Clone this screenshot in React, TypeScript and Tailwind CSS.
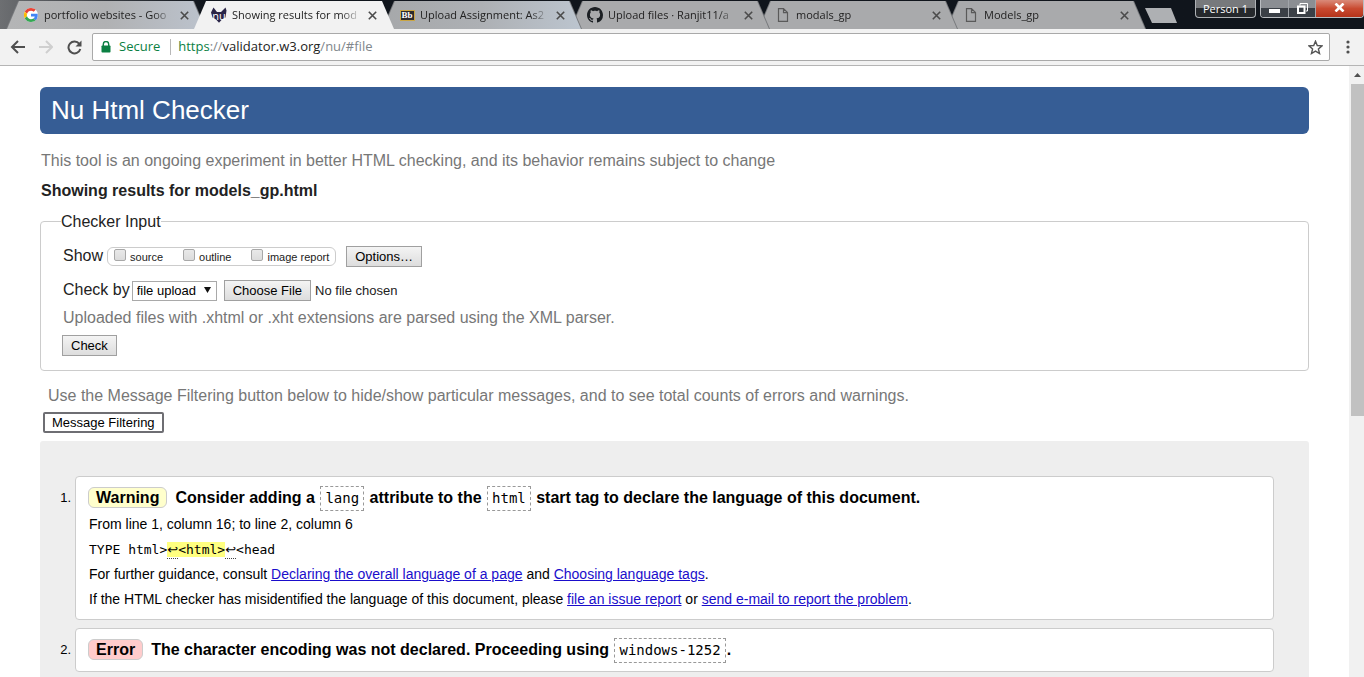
import React from "react";

type Tab = { title: string; icon: React.ReactNode; active?: boolean; fill: string; z: string };

const GoogleIcon = () => (
  <svg width="14" height="14" viewBox="0 0 48 48" aria-hidden="true">
    <circle cx="24" cy="24" r="24" fill="#fff" />
    <path fill="#EA4335" d="M24 9.500c3.500 0 6.700 1.200 9.200 3.600l6.900-6.900C35.900 2.400 30.500 0 24 0 14.600 0 6.500 5.400 2.600 13.200l8 6.200C12.400 13.700 17.700 9.500 24 9.500z" />
    <path fill="#4285F4" d="M47 24.500c0-1.600-.2-3.100-.4-4.500H24v9h12.900c-.6 3-2.300 5.500-4.800 7.200l7.700 6C44.400 38 47 31.800 47 24.500z" />
    <path fill="#FBBC05" d="M10.500 28.600a14.500 14.500 0 0 1 0-9.200l-8-6.200a24 24 0 0 0 0 21.600z" />
    <path fill="#34A853" d="M24 48c6.500 0 11.900-2.100 15.900-5.800l-7.700-6c-2.200 1.500-4.900 2.300-8.200 2.300-6.300 0-11.600-4.200-13.500-9.900l-8 6.200C6.500 42.600 14.600 48 24 48z" />
  </svg>
);

const NuIcon = () => (
  <span className="grid size-4 place-items-center">
    <svg className="col-start-1 row-start-1" width="16" height="16" viewBox="0 0 16 16" aria-hidden="true">
      <path d="M2.500.5l3.500 4.500h4l4.500-4.500 1 3-1 7-3.500 2-3 3.300-3-3.300-3.500-2-1.500-5z" fill="#2a2547" />
    </svg>
    <span className="col-start-1 row-start-1 text-[11px] leading-none text-white">nu</span>
  </span>
);

const BbIcon = () => (
  <span className="flex h-[11px] w-[15px] items-center justify-center border border-[#c9a544] bg-[#2b2b2b] font-['Liberation_Serif',serif] text-[9px] leading-none font-bold text-white">
    Bb
  </span>
);

const GithubIcon = () => (
  <svg width="16" height="16" viewBox="0 0 16 16" fill="#1b1f23" aria-hidden="true">
    <path d="M8 0C3.580 0 0 3.580 0 8c0 3.540 2.290 6.530 5.470 7.590.4.070.55-.17.55-.38 0-.19-.01-.82-.01-1.490-2.010.37-2.530-.49-2.690-.94-.09-.23-.48-.94-.82-1.130-.28-.15-.68-.52-.01-.53.63-.01 1.080.58 1.230.82.72 1.210 1.870.87 2.330.66.07-.52.28-.87.51-1.070-1.780-.2-3.640-.89-3.640-3.950 0-.87.31-1.590.82-2.150-.08-.2-.36-1.020.08-2.120 0 0 .67-.21 2.200.82.64-.18 1.320-.27 2-.27s1.360.09 2 .27c1.530-1.040 2.200-.82 2.200-.82.44 1.100.16 1.920.08 2.120.51.56.82 1.270.82 2.150 0 3.070-1.870 3.750-3.650 3.950.29.25.54.73.54 1.480 0 1.070-.01 1.930-.01 2.200 0 .21.15.46.55.38A8.010 8.010 0 0 0 16 8c0-4.420-3.580-8-8-8z" />
  </svg>
);

const PageIcon = () => (
  <svg width="16" height="16" viewBox="0 0 16 16" fill="none" stroke="#5a5a5a" strokeWidth="1.200" aria-hidden="true">
    <path d="M3.500 1.600h5l4 4v8.800h-9zM8.500 1.600v4h4" />
  </svg>
);

const grey = "bg-[#a9aaac]";

const tabs: Tab[] = [
  { title: "portfolio websites - Goo", icon: <GoogleIcon />, fill: "bg-linear-to-r from-[#b4b5b6] via-[#b0b1b3] to-[#bcc3cd]", z: "z-[5]" },
  { title: "Showing results for mod", icon: <NuIcon />, active: true, fill: "bg-[#f2f2f2]", z: "z-[6]" },
  { title: "Upload Assignment: As2", icon: <BbIcon />, fill: "bg-linear-to-r from-[#a6a8aa] via-[#adb0b4] to-[#bcc5cf]", z: "z-[4]" },
  { title: "Upload files · Ranjit11/a", icon: <GithubIcon />, fill: grey, z: "z-[3]" },
  { title: "modals_gp", icon: <PageIcon />, fill: grey, z: "z-[2]" },
  { title: "Models_gp", icon: <PageIcon />, fill: grey, z: "z-[1]" },
];

function BrowserTab({ tab }: { tab: Tab }) {
  return (
    <div
      className={`relative -mr-3 h-7 max-w-[200px] min-w-0 flex-1 [clip-path:polygon(0_100%,12px_0,calc(100%-12px)_0,100%_100%)] ${tab.z} ${tab.active ? "bg-[#f2f2f2]" : "bg-[#77797c]"}`}
    >
      <div
        className={`flex h-full items-center pr-4 pl-[17px] [clip-path:polygon(1px_100%,13px_0,calc(100%-13px)_0,calc(100%-1px)_100%)] ${tab.fill}`}
      >
        <span className="flex w-4 shrink-0 justify-center">{tab.icon}</span>
        <span className="ml-[5px] min-w-0 flex-1 overflow-hidden text-[11px] whitespace-nowrap text-[#222] [mask-image:linear-gradient(to_right,black_85%,transparent)]">
          {tab.title}
        </span>
        <button type="button" aria-label={`Close ${tab.title}`} className="ml-1.5 flex h-4 w-[11px] shrink-0 items-center justify-center">
          <svg width="9" height="9" viewBox="0 0 9 9" stroke="#4b4b4b" strokeWidth="1.600" aria-hidden="true">
            <path d="M.8.8l7.400 7.400M8.200.8L.8 8.200" />
          </svg>
        </button>
      </div>
    </div>
  );
}

function TabStrip() {
  return (
    <div className="flex h-[29px] items-start bg-linear-to-r from-[#6d6f72] via-[#10151c] via-15% to-[#10151c] font-['Open_Sans','Noto_Sans',sans-serif]">
      <div className="ml-1.5 flex min-w-0 flex-1 items-start pt-px">
        {tabs.map((t) => (
          <BrowserTab key={t.title} tab={t} />
        ))}
        <button
          type="button"
          aria-label="New tab"
          className="mt-[7px] ml-[11px] h-[15px] w-8 shrink-0 bg-[#aeb0b3] [clip-path:polygon(0_0,26px_0,100%_100%,7px_100%)]"
        />
      </div>
      <div className="flex shrink-0 items-start gap-1">
        <button type="button" className="h-[18px] w-[61px] rounded-b-[4px] border border-t-0 border-[#aeb1b5] bg-linear-to-b from-[#77797c] from-50% to-[#25282c] to-50% text-[11px] leading-4 text-white">
          Person 1
        </button>
        <div className="flex h-[18px] overflow-hidden rounded-b-[4px] border border-t-0 border-[#b9bcc0]">
          <button type="button" aria-label="Minimize" className="flex w-7 items-end justify-center border-r border-[#a1a5aa] bg-linear-to-b from-[#8b8e93] from-45% to-[#3b4047] to-45% pb-1">
            <svg width="11" height="4" aria-hidden="true"><rect width="11" height="4" fill="#fff" /></svg>
          </button>
          <button type="button" aria-label="Restore" className="flex w-[27px] items-center justify-center border-r border-[#a1a5aa] bg-linear-to-b from-[#8b8e93] from-45% to-[#3b4047] to-45%">
            <svg width="11" height="11" viewBox="0 0 11 11" fill="none" stroke="#fff" aria-hidden="true">
              <path d="M3 2.500v-2h7.500V8H9" />
              <rect x="1" y="3.500" width="6.500" height="6.500" strokeWidth="2" />
            </svg>
          </button>
          <button type="button" aria-label="Close window" className="flex w-[47px] items-center justify-center bg-linear-to-b from-[#d98a79] from-0% via-[#c94a30] via-50% to-[#b5331a] pb-0.5">
            <svg width="11" height="9" viewBox="0 0 11 9" stroke="#fff" strokeWidth="2.600" aria-hidden="true">
              <path d="M1.500.5l8 8M9.500.5l-8 8" />
            </svg>
          </button>
        </div>
      </div>
    </div>
  );
}

function Toolbar() {
  return (
    <div className="flex h-[37px] items-center border-b border-[#b5b5b5] bg-[#f2f2f2] pr-2 pl-[10px] font-['Open_Sans','Noto_Sans',sans-serif]">
      <button type="button" aria-label="Back" className="mr-3 flex w-4 justify-center">
        <svg width="16" height="14" viewBox="0 0 16 14" fill="none" stroke="#4f4f4f" strokeWidth="2" aria-hidden="true">
          <path d="M15 7H2M8 1L2 7l6 6" />
        </svg>
      </button>
      <button type="button" aria-label="Forward" className="mr-3 flex w-4 justify-center">
        <svg width="14" height="14" viewBox="0 0 14 14" fill="none" stroke="#cfcfcf" strokeWidth="2" aria-hidden="true">
          <path d="M0 7h12M7 1l6 6-6 6" />
        </svg>
      </button>
      <button type="button" aria-label="Reload" className="mr-[10px] flex w-4 justify-center">
        <svg width="15" height="15" viewBox="0 0 15 15" fill="none" stroke="#4f4f4f" strokeWidth="2" aria-hidden="true">
          <path d="M12.300 3.800A6 6 0 1 0 13.300 9" />
          <path d="M14.500.5v6h-6z" fill="#4f4f4f" stroke="none" />
        </svg>
      </button>
      <div className="flex h-7 min-w-0 flex-1 items-center rounded-[2px] border border-[#a9a9a9] bg-white px-2">
        <svg width="10" height="12" viewBox="0 0 10 12" aria-hidden="true">
          <path d="M2.300 5V3.200a2.700 2.700 0 0 1 5.400 0V5" fill="none" stroke="#0b8043" strokeWidth="1.400" />
          <rect x=".5" y="4.500" width="9" height="7" rx=".8" fill="#0b8043" />
        </svg>
        <span className="ml-2 text-[13px] text-[#0b8043]">Secure</span>
        <span className="mx-[7px] ml-[10px] h-4 w-px bg-[#b8b8b8]" />
        <span className="min-w-0 flex-1 truncate text-[13px] text-[#80868b]">
          <span className="text-[#0b8043]">https</span>://<span className="text-[#222]">validator.w3.org</span>/nu/#file
        </span>
        <button type="button" aria-label="Bookmark this page" className="-mr-0.5">
          <svg width="15" height="15" viewBox="0 0 16 16" fill="none" stroke="#555" strokeWidth="1.500" aria-hidden="true">
            <path d="M8 1.300l1.900 4.600 5 .4-3.800 3.200 1.200 4.900L8 11.800l-4.300 2.600 1.200-4.900-3.800-3.200 5-.4z" />
          </svg>
        </button>
      </div>
      <button type="button" aria-label="Menu" className="ml-[10px] flex w-4 justify-center">
        <svg width="4" height="14" viewBox="0 0 4 14" fill="#4f4f4f" aria-hidden="true">
          <circle cx="2" cy="2" r="1.600" />
          <circle cx="2" cy="7" r="1.600" />
          <circle cx="2" cy="12" r="1.600" />
        </svg>
      </button>
    </div>
  );
}

const buttonStyle =
  "h-[21px] border border-[#a0a0a0] bg-linear-to-b from-[#f4f4f4] to-[#dddddd] px-2 text-[13px] leading-[19px] text-black";

function Option({ id, label }: { id: string; label: string }) {
  return (
    <span className="flex items-start">
      <input id={id} type="checkbox" className="mt-px size-3 appearance-none rounded-[2px] border border-[#a8a8a8] bg-linear-to-b from-[#e9e9e9] to-[#dcdcdc]" />
      <label htmlFor={id} className="ml-1 pt-0.5 text-[11px] leading-[14px]">{label}</label>
    </span>
  );
}

function CheckerForm() {
  return (
    <form onSubmit={(e) => e.preventDefault()}>
      <fieldset className="rounded-[4px] border border-[#ccc] pr-5 pb-[14px] pl-[21px]">
        <legend className="-ml-px h-5 text-[16px] leading-[22px]">Checker Input</legend>
        <div className="mt-[15px] flex h-[21px] items-center">
          <span className="pb-0.5 pl-px leading-5">Show</span>
          <div className="ml-1 flex h-[19px] items-start gap-5 rounded-[6px] border border-[#ccc] px-1.5">
            <Option id="show-source" label="source" />
            <Option id="show-outline" label="outline" />
            <Option id="show-image" label="image report" />
          </div>
          <button type="button" className={`ml-[10px] ${buttonStyle}`}>Options…</button>
        </div>
        <div className="mt-[13px] flex h-[21px] items-center">
          <label htmlFor="check-by" className="pb-0.5 pl-px leading-5">Check by</label>
          <span className="relative ml-0.5">
            <select id="check-by" className="block h-5 w-[85px] appearance-none border border-[#a9a9a9] bg-white pl-1 text-[13px] leading-[18px] text-black">
              <option>file upload</option>
              <option>address</option>
              <option>text input</option>
            </select>
            <svg className="pointer-events-none absolute top-1.5 right-1.5" width="7" height="6" aria-hidden="true">
              <path d="M0 0h7L3.500 6z" fill="#111" />
            </svg>
          </span>
          <input
            type="file"
            aria-label="File to check"
            className="ml-[7px] h-[21px] text-[13px] leading-[21px] file:mr-1 file:h-[21px] file:border file:border-solid file:border-[#a0a0a0] file:bg-linear-to-b file:from-[#f4f4f4] file:to-[#dddddd] file:px-2 file:text-[13px] file:leading-[19px] file:text-black"
          />
        </div>
        <p className="mt-[7px] pl-px leading-5 text-[#777]">Uploaded files with .xhtml or .xht extensions are parsed using the XML parser.</p>
        <button type="submit" className={`mt-[7px] block ${buttonStyle}`}>Check</button>
      </fieldset>
    </form>
  );
}

const Code = ({ children }: { children: React.ReactNode }) => (
  <code className="mx-px inline-block h-[25px] border border-dashed border-[#999] px-1 font-['DejaVu_Sans_Mono',monospace] text-[14px] leading-[23px] font-normal">
    {children}
  </code>
);

const Badge = ({ tone, children }: { tone: "warning" | "error"; children: React.ReactNode }) => (
  <strong className={`mr-2 inline-block rounded-[6px] border border-[#ccc] px-[7px] leading-[19px] ${tone === "warning" ? "bg-[#ffffcc]" : "bg-[#ffcccc]"}`}>
    {children}
  </strong>
);

const Break = () => (
  <span className="inline-block border-b border-dotted border-[#444] font-['DejaVu_Sans',sans-serif] leading-4" title="Line break">↩</span>
);

const Link = ({ children }: { children: React.ReactNode }) => (
  <a href="#file" className="text-[#1a0dcb] underline">{children}</a>
);

function Message({ n, children }: { n: number; children: React.ReactNode }) {
  return (
    <li className="flex">
      <span className="w-[35px] shrink-0 pt-3 pr-1 text-right text-[13px] leading-5">{n}.</span>
      <div className="min-w-0 flex-1 rounded-[4px] border border-[#ccc] bg-white px-3 py-2">{children}</div>
    </li>
  );
}

function Results() {
  return (
    <ol className="mt-2 flex flex-1 flex-col gap-2 rounded-t-[3px] bg-[#eee] pt-[35px] pr-[35px] text-[14px] text-black">
      <Message n={1}>
        <h3 className="h-[26px] text-[16px] leading-[25px] font-bold">
          <Badge tone="warning">Warning</Badge>
          Consider adding a <Code>lang</Code> attribute to the <Code>html</Code> start tag to declare the language of this document.
        </h3>
        <div className="h-[100px] pt-px pl-px leading-[25px]">
          <p>From line 1, column 16; to line 2, column 6</p>
          <p className="h-[25px] font-['DejaVu_Sans_Mono',monospace] text-[13px] whitespace-nowrap">
            TYPE html&gt;<mark className="bg-[#ffff80] text-black"><Break />&lt;html&gt;</mark><Break />&lt;head
          </p>
          <p>
            For further guidance, consult <Link>Declaring the overall language of a page</Link> and <Link>Choosing language tags</Link>.
          </p>
          <p>
            If the HTML checker has misidentified the language of this document, please <Link>file an issue report</Link> or <Link>send e-mail to report the problem</Link>.
          </p>
        </div>
      </Message>
      <Message n={2}>
        <h3 className="h-[26px] text-[16px] leading-[25px] font-bold">
          <Badge tone="error">Error</Badge>
          The character encoding was not declared. Proceeding using <Code>windows-1252</Code>.
        </h3>
      </Message>
    </ol>
  );
}

export default function App() {
  return (
    <div className="flex h-screen flex-col overflow-hidden bg-white font-['Liberation_Sans',Arial,sans-serif] text-[16px] text-[#222]">
      <TabStrip />
      <Toolbar />
      <div className="flex min-h-0 flex-1">
        <main className="flex min-w-0 flex-1 flex-col overflow-hidden px-10 pt-[21px]">
          <h1 className="shrink-0 rounded-[6px] bg-[#365d95] px-[11px] text-[26px] leading-[47px] text-white">Nu Html Checker</h1>
          <p className="mt-[17px] pl-px leading-5 text-[#777]">This tool is an ongoing experiment in better HTML checking, and its behavior remains subject to change</p>
          <h2 className="mt-[10px] mb-[10px] pl-px leading-5 font-bold">Showing results for models_gp.html</h2>
          <CheckerForm />
          <p className="mt-[15px] pl-2 leading-5 text-[#777]">
            Use the Message Filtering button below to hide/show particular messages, and to see total counts of errors and warnings.
          </p>
          <button type="button" className="mt-1.5 ml-[3px] h-[21px] shrink-0 self-start rounded-[2px] border-2 border-[#6e6e73] bg-white px-[7px] text-[13px] leading-[17px] text-black">
            Message Filtering
          </button>
          <Results />
        </main>
        <div className="flex w-[15px] shrink-0 flex-col bg-[#f1f1f1] pl-0.5" aria-hidden="true">
          <div className="flex h-[18px] items-center justify-center">
            <svg width="7" height="4"><path d="M0 4h7L3.500 0z" fill="#505050" /></svg>
          </div>
          <div className="min-h-0 flex-1">
            <div className="h-[56%] bg-[#c1c1c1]" />
          </div>
        </div>
      </div>
    </div>
  );
}
